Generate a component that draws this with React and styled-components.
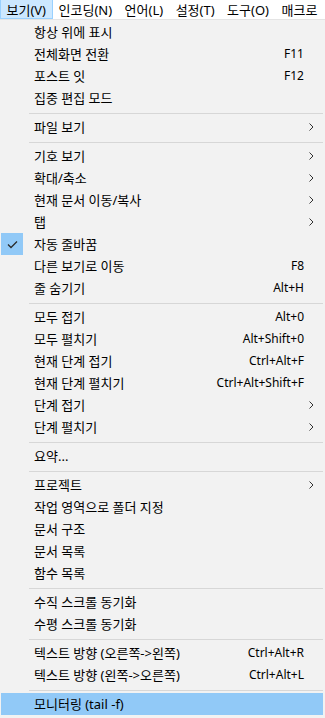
import React from 'react';
import styled, { createGlobalStyle } from 'styled-components';

const GlobalStyle = createGlobalStyle`
  body {
    margin: 0;
    background: #f2f2f2;
    font-family: "Noto Sans", "Noto Sans CJK KR", sans-serif;
    font-size: 12px;
    color: #000;
  }
`;

const Screen = styled.div`
  width: 325px;
  height: 718px;
  overflow: hidden;
  display: flex;
  flex-direction: column;
`;

const MenuBar = styled.div`
  display: flex;
  height: 19px;
  background: #fff;
  flex-shrink: 0;
  font-size: 13px;
`;

const BarItem = styled.div`
  display: flex;
  align-items: center;
  height: 18px;
  padding: 0 5.5px 0 ${p => (p.$active ? '5.5px' : '5px')};
  border: 1px solid ${p => (p.$active ? '#99d1ff' : 'transparent')};
  border-top: 0;
  background: ${p => (p.$active ? '#cce8ff' : 'transparent')};
  white-space: nowrap;
`;

const Dropdown = styled.div`
  flex: 1;
  background: #f2f2f2;
  border-top: 1px solid #e4e4e4;
  padding: 1px 2px 2px 1px;
`;

const Item = styled.div`
  display: grid;
  grid-template-columns: 33px 1fr auto 19px;
  align-items: center;
  height: 22px;
  background: ${p => (p.$hl ? '#91c9f7' : 'transparent')};
  white-space: nowrap;
`;

const CheckCell = styled.div`
  display: flex;
  align-items: center;
  height: 22px;
`;

const CheckBox = styled.span`
  display: flex;
  align-items: center;
  justify-content: center;
  width: 22px;
  height: 22px;
  background: #91c9f7;
`;

const Label = styled.span`
  font-size: 13px;
  line-height: 22px;
`;

const Shortcut = styled.span`
  text-align: right;
  line-height: 22px;
`;

const ArrowCell = styled.span`
  display: flex;
  align-items: center;
  padding-left: 5px;
`;

const Sep = styled.div`
  height: 1px;
  margin: 4px 0 2px 28px;
  background: #d7d7d7;
`;

const Check = () => (
  <svg width="22" height="22" viewBox="0 0 22 22">
    <path d="M7 11.5 L10 14.5 L16 8.5" fill="none" stroke="#2b2b2b" strokeWidth="1.3" />
  </svg>
);

const Chevron = () => (
  <svg width="5" height="8" viewBox="0 0 5 8">
    <path d="M0.5 0.5 L4 4 L0.5 7.5" fill="none" stroke="#333" strokeWidth="1" />
  </svg>
);

const bar = ['보기(V)', '인코딩(N)', '언어(L)', '설정(T)', '도구(O)', '매크로'];

const items = [
  { t: '항상 위에 표시' },
  { t: '전체화면 전환', k: 'F11' },
  { t: '포스트 잇', k: 'F12' },
  { t: '집중 편집 모드' },
  '-',
  { t: '파일 보기', sub: true },
  '-',
  { t: '기호 보기', sub: true },
  { t: '확대/축소', sub: true },
  { t: '현재 문서 이동/복사', sub: true },
  { t: '탭', sub: true },
  { t: '자동 줄바꿈', checked: true },
  { t: '다른 보기로 이동', k: 'F8' },
  { t: '줄 숨기기', k: 'Alt+H' },
  '-',
  { t: '모두 접기', k: 'Alt+0' },
  { t: '모두 펼치기', k: 'Alt+Shift+0' },
  { t: '현재 단계 접기', k: 'Ctrl+Alt+F' },
  { t: '현재 단계 펼치기', k: 'Ctrl+Alt+Shift+F' },
  { t: '단계 접기', sub: true },
  { t: '단계 펼치기', sub: true },
  '-',
  { t: '요약...' },
  '-',
  { t: '프로젝트', sub: true },
  { t: '작업 영역으로 폴더 지정' },
  { t: '문서 구조' },
  { t: '문서 목록' },
  { t: '함수 목록' },
  '-',
  { t: '수직 스크롤 동기화' },
  { t: '수평 스크롤 동기화' },
  '-',
  { t: '텍스트 방향 (오른쪽->왼쪽)', k: 'Ctrl+Alt+R' },
  { t: '텍스트 방향 (왼쪽->오른쪽)', k: 'Ctrl+Alt+L' },
  '-',
  { t: '모니터링 (tail -f)', hl: true },
];

export default function App() {
  return (
    <Screen>
      <GlobalStyle />
      <MenuBar>
        {bar.map((b, i) => (
          <BarItem key={b} $active={i === 0}>{b}</BarItem>
        ))}
      </MenuBar>
      <Dropdown>
        {items.map((it, i) =>
          it === '-' ? (
            <Sep key={i} />
          ) : (
            <Item key={i} $hl={it.hl}>
              <CheckCell>{it.checked && <CheckBox><Check /></CheckBox>}</CheckCell>
              <Label>{it.t}</Label>
              <Shortcut>{it.k}</Shortcut>
              <ArrowCell>{it.sub && <Chevron />}</ArrowCell>
            </Item>
          )
        )}
      </Dropdown>
    </Screen>
  );
}
